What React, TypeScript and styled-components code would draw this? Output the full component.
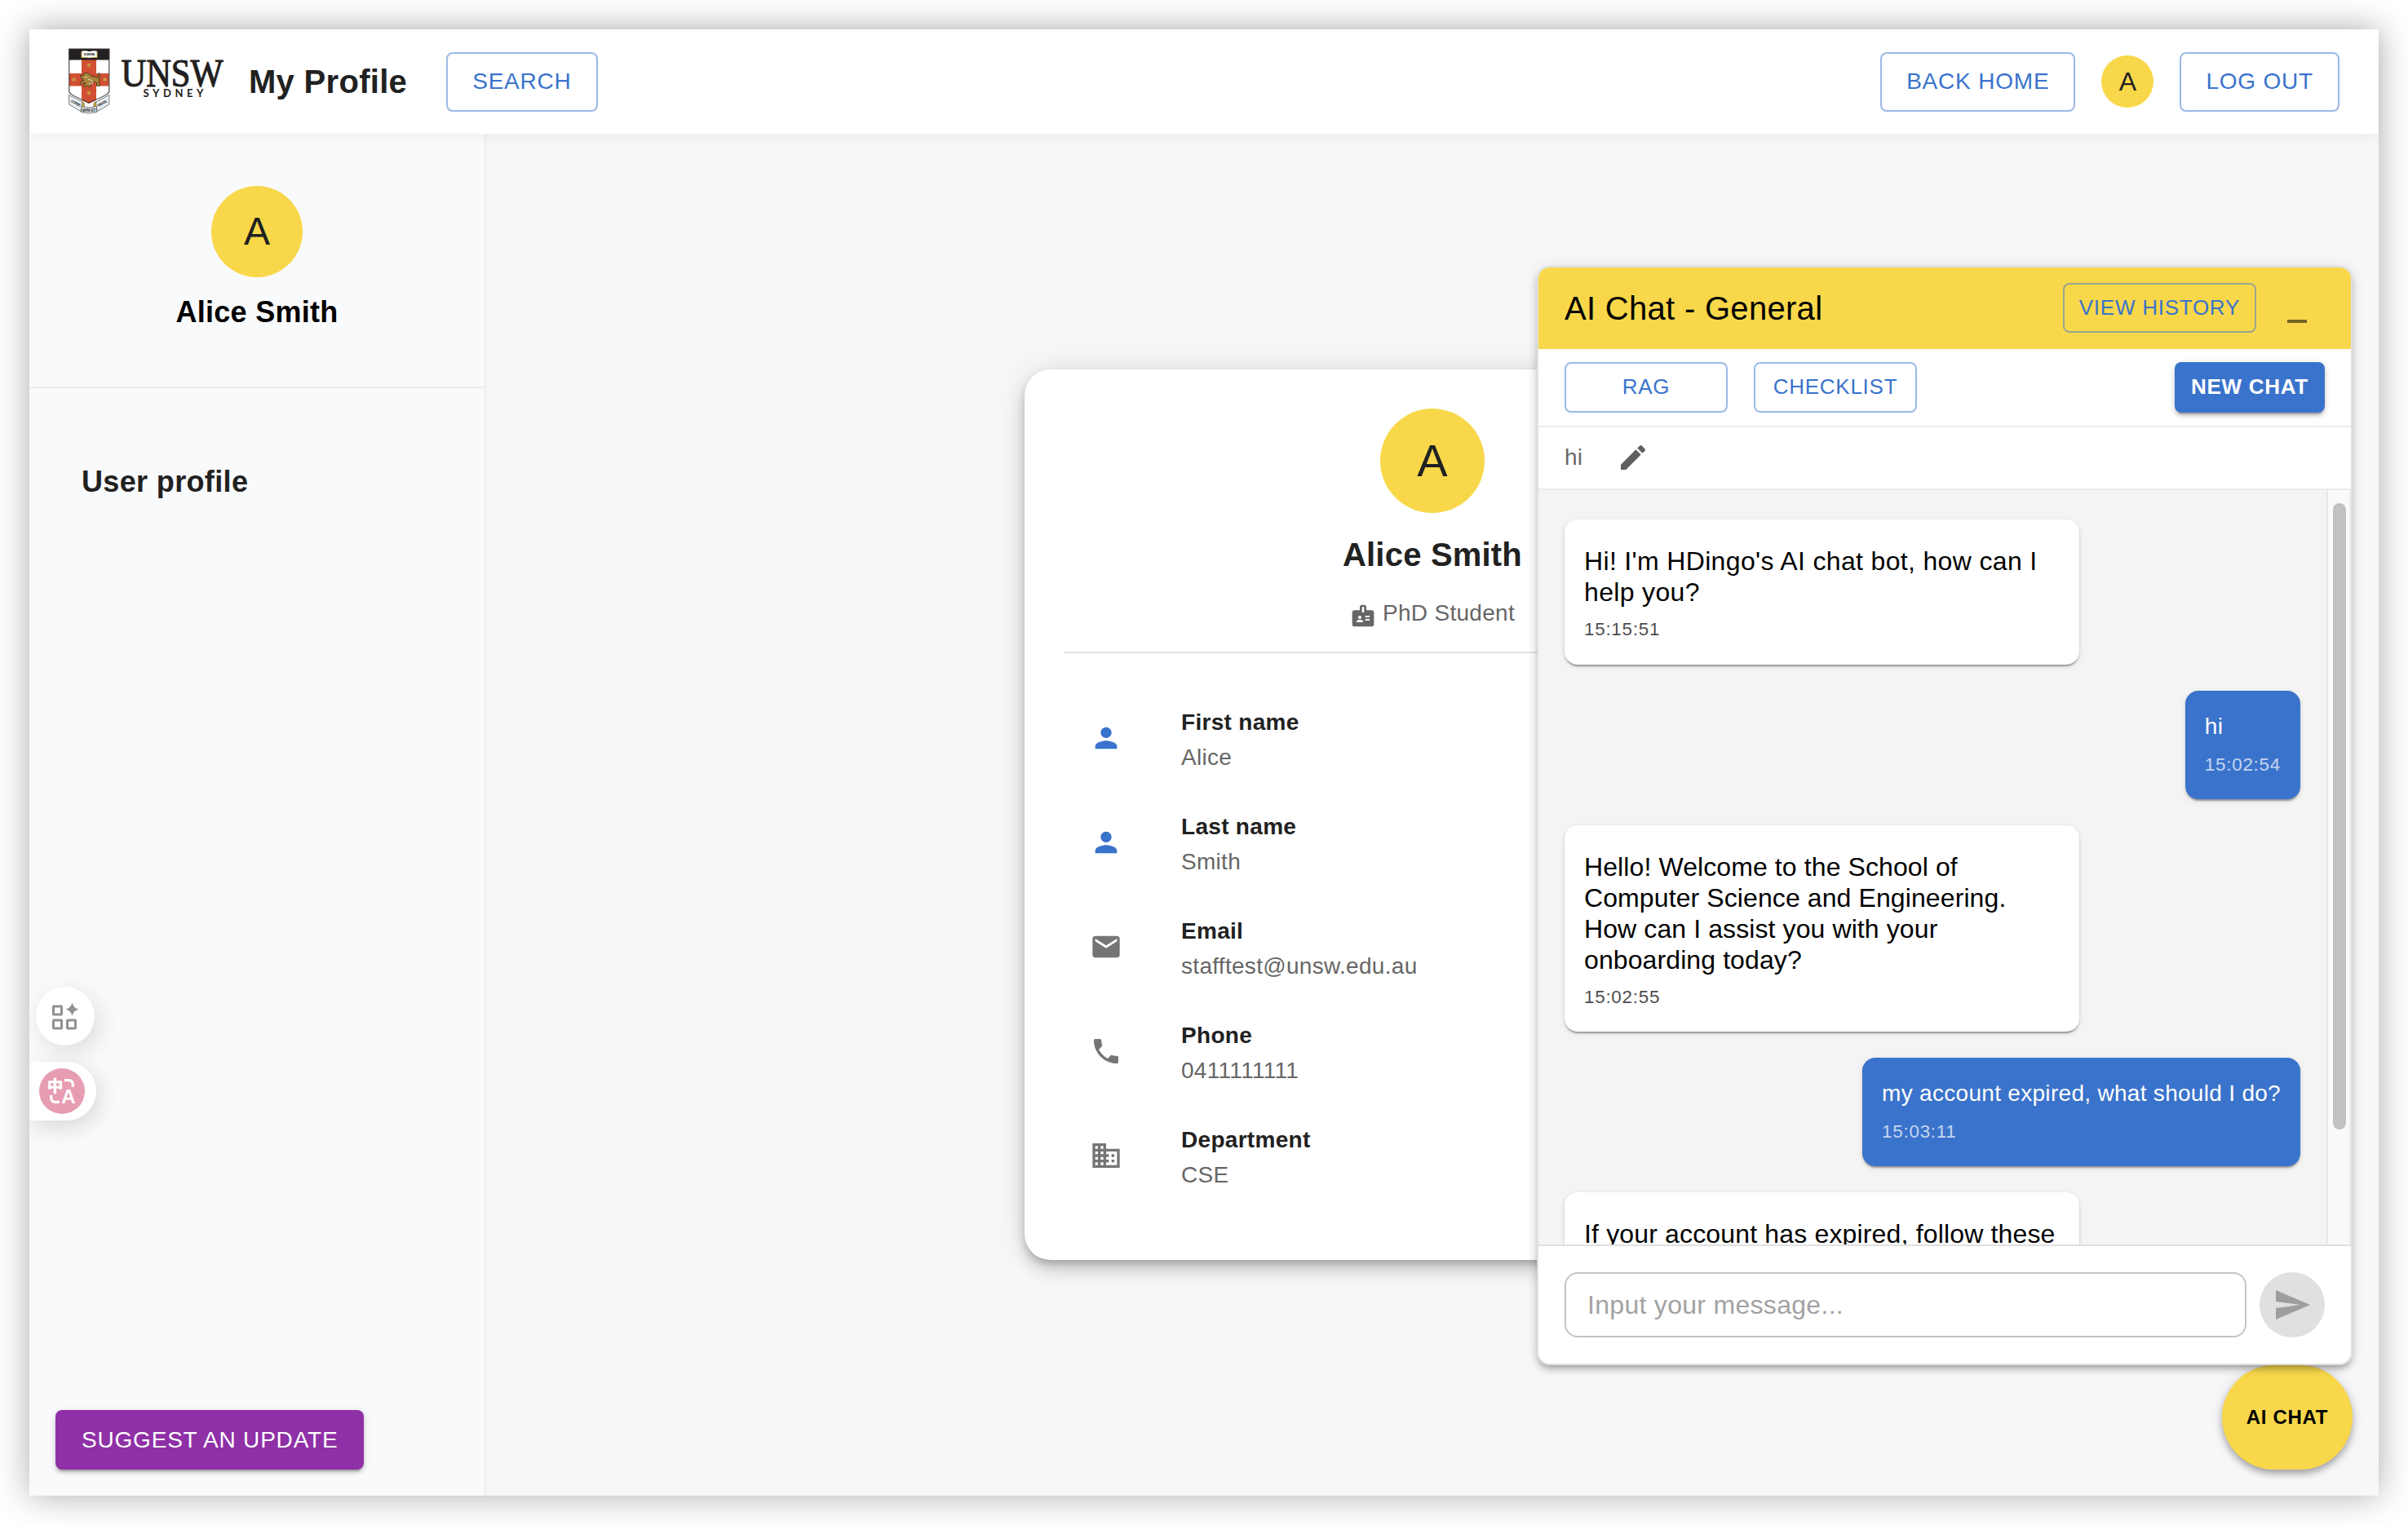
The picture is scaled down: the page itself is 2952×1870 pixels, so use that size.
import React from "react";
import styled, { createGlobalStyle } from "styled-components";

const color = {
  blue: "#3a73cb",
  blueBorder: "rgba(58, 115, 203, 0.5)",
  yellow: "#f8d84a",
  purple: "#8f30a7",
  ink: "#212121",
  muted: "#666666",
  icon: "#757575",
  line: "#e0e0e0",
};

const raised =
  "0 6px 2px -4px rgba(0,0,0,.2), 0 4px 4px 0 rgba(0,0,0,.14), 0 2px 10px 0 rgba(0,0,0,.12)";

const GlobalStyle = createGlobalStyle`
  *, *::before, *::after { box-sizing: border-box; }
  body {
    margin: 0;
    background: #fff;
    font-family: "Liberation Sans", Arial, sans-serif;
    color: ${color.ink};
  }
  button, input { font-family: inherit; margin: 0; }
  h1, h2, p { margin: 0; }
`;

const Page = styled.div`
  width: 2952px;
  height: 1870px;
  padding: 36px;
  overflow: hidden;
`;

const Window = styled.div`
  position: relative;
  display: flex;
  flex-direction: column;
  width: 2880px;
  height: 1798px;
  background: #f7f7f9;
  box-shadow: 0 0 40px rgba(0, 0, 0, 0.33);
`;

const TopBar = styled.header`
  position: relative;
  z-index: 1;
  display: flex;
  align-items: center;
  height: 128px;
  flex: none;
  padding: 0 48px;
  background: #fff;
  box-shadow: 0 4px 16px rgba(0, 0, 0, 0.05);
`;

const LogoSvg = styled.svg`
  display: block;
  width: 194px;
  height: 82px;
  margin-right: 27px;
  overflow: visible;
`;

const PageTitle = styled.h1`
  font-size: 40px;
  line-height: 64px;
  letter-spacing: 0.3px;
  margin-right: 48px;
`;

const Actions = styled.div`
  display: flex;
  align-items: center;
  gap: 32px;
  margin-left: auto;
`;

const OutlinedButton = styled.button<{ $small?: boolean; $width?: number }>`
  height: ${(p) => (p.$small ? "61.5px" : "73px")};
  width: ${(p) => (p.$width ? `${p.$width}px` : "auto")};
  padding: 0 ${(p) => (p.$small ? "18px" : "30px")};
  border: 2px solid ${color.blueBorder};
  border-radius: 8px;
  background: transparent;
  color: ${color.blue};
  font-size: ${(p) => (p.$small ? "26px" : "28px")};
  letter-spacing: 0.02857em;
  text-transform: uppercase;
  white-space: nowrap;
`;

const FilledButton = styled.button<{ $small?: boolean; $tone: string }>`
  height: ${(p) => (p.$small ? "61.5px" : "73px")};
  padding: 0 ${(p) => (p.$small ? "20px" : "32px")};
  border: 0;
  border-radius: 8px;
  background: ${(p) => p.$tone};
  color: #fff;
  font-size: ${(p) => (p.$small ? "26px" : "28px")};
  font-weight: ${(p) => (p.$small ? 700 : 400)};
  letter-spacing: 0.02857em;
  text-transform: uppercase;
  white-space: nowrap;
  box-shadow: ${raised};
`;

const Avatar = styled.div<{ $size: number; $font: number }>`
  display: flex;
  align-items: center;
  justify-content: center;
  flex: none;
  width: ${(p) => p.$size}px;
  height: ${(p) => p.$size}px;
  border-radius: 50%;
  background: ${color.yellow};
  font-size: ${(p) => p.$font}px;
  line-height: 1;
`;

const Body = styled.div`
  display: flex;
  flex: 1;
  min-height: 0;
`;

const Sidebar = styled.aside`
  display: flex;
  flex-direction: column;
  align-items: flex-start;
  width: 560px;
  flex: none;
  padding-bottom: 32px;
  background: #f9fafc;
  border-right: 2px solid #ebecee;
`;

const SidebarUser = styled.div`
  display: flex;
  flex-direction: column;
  align-items: center;
  align-self: stretch;
  gap: 16px;
  height: 312px;
  padding-top: 64px;
  border-bottom: 2px solid #ebecee;
`;

const SidebarName = styled.div`
  font-size: 36px;
  line-height: 54px;
  font-weight: 700;
  letter-spacing: 0.27px;
  color: #000;
`;

const SidebarLink = styled.div`
  margin: 88px 0 auto 64px;
  font-size: 36px;
  line-height: 54px;
  font-weight: 700;
  letter-spacing: 0.35px;
`;

const SidebarFooter = styled.div`
  padding-left: 32px;
`;

const Main = styled.main`
  display: flex;
  flex: 1;
  align-items: center;
  justify-content: center;
`;

const ProfileCard = styled.section`
  display: flex;
  flex-direction: column;
  align-items: center;
  width: 1000px;
  height: 1092px;
  padding: 48px;
  border-radius: 32px;
  background: #fff;
  box-shadow: 0 6px 10px -2px rgba(0, 0, 0, 0.2),
    0 12px 20px 0 rgba(0, 0, 0, 0.14), 0 2px 36px 0 rgba(0, 0, 0, 0.12);
`;

const ProfileName = styled.h2`
  margin-top: 19px;
  font-size: 40px;
  line-height: 64px;
  letter-spacing: 0.2px;
`;

const Role = styled.div`
  display: flex;
  gap: 8px;
  margin-top: 20px;
  height: 40px;
  font-size: 28px;
  line-height: 40px;
  letter-spacing: 0.3px;
  color: ${color.muted};

  svg {
    margin-top: 7px;
  }
`;

const Divider = styled.div`
  align-self: stretch;
  flex: none;
  height: 2px;
  margin: 27px 0 24px;
  background: ${color.line};
`;

const FieldList = styled.ul`
  align-self: stretch;
  margin: 0;
  padding: 16px 0;
  list-style: none;
`;

const Field = styled.li`
  display: flex;
  align-items: center;
  height: 128px;
  padding: 0 32px;
`;

const FieldIcon = styled.div<{ $tone: string }>`
  display: flex;
  width: 112px;
  color: ${(p) => p.$tone};
`;

const FieldText = styled.div`
  padding-top: 4px;
  font-size: 28px;
  line-height: 43px;
  letter-spacing: 0.3px;
`;

const FieldLabel = styled.div`
  font-weight: 700;
`;

const FieldValue = styled.div`
  color: ${color.muted};
`;

const IconSvg = styled.svg`
  display: block;
  flex: none;
  fill: currentColor;
`;

const ChatPanel = styled.section`
  position: absolute;
  z-index: 3;
  right: 32px;
  top: 290px;
  display: flex;
  flex-direction: column;
  width: 1000px;
  height: 1348px;
  overflow: hidden;
  border: 2px solid ${color.line};
  border-radius: 16px;
  background: #fff;
`;

const ChatShadow = styled.div`
  position: absolute;
  z-index: 2;
  right: 32px;
  top: 290px;
  width: 1000px;
  height: 1348px;
  border-radius: 16px;
  box-shadow: 0 6px 6px -4px rgba(0, 0, 0, 0.2),
    0 6px 8px 0 rgba(0, 0, 0, 0.14), 0 2px 16px 0 rgba(0, 0, 0, 0.12);
`;

const ChatHeader = styled.div`
  display: flex;
  align-items: center;
  flex: none;
  height: 100px;
  padding: 0 32px;
  background: ${color.yellow};

  & > ${OutlinedButton} {
    margin-bottom: 1px;
  }
`;

const ChatTitle = styled.h2`
  margin-right: auto;
  font-size: 40px;
  font-weight: 400;
  letter-spacing: 0.3px;
  color: #000;
`;

const MinimizeButton = styled.button`
  display: flex;
  margin-left: 16px;
  padding: 10px;
  border: 0;
  background: transparent;
  color: rgba(0, 0, 0, 0.54);
`;

const ChatToolbar = styled.div`
  display: flex;
  flex: none;
  gap: 32px;
  height: 95.5px;
  padding: 16px 32px;
  border-bottom: 2px solid #ebebeb;

  & > :last-child {
    margin-left: auto;
  }
`;

const ChatTopic = styled.div`
  display: flex;
  align-items: center;
  flex: none;
  gap: 42px;
  height: 77.5px;
  padding: 0 32px;
  border-bottom: 2px solid #ebebeb;
  font-size: 28px;
  letter-spacing: 0.3px;
  color: ${color.muted};

  svg {
    color: #606060;
  }
`;

const ChatBody = styled.div`
  display: flex;
  flex: 1;
  min-height: 0;
  background: #f4f4f4;
`;

const Messages = styled.div`
  display: flex;
  flex: 1;
  flex-direction: column;
  align-items: flex-start;
  gap: 32px;
  overflow: hidden;
  padding: 36px 32px 0;
`;

const Bubble = styled.div<{ $own?: boolean }>`
  flex: none;
  align-self: ${(p) => (p.$own ? "flex-end" : "flex-start")};
  width: ${(p) => (p.$own ? "auto" : "631px")};
  padding: ${(p) => (p.$own ? "24px" : "32px 24px 24.5px")};
  border-radius: 16px;
  background: ${(p) => (p.$own ? color.blue : "#fff")};
  color: ${(p) => (p.$own ? "#fff" : "#000")};
  box-shadow: 0 4px 2px -2px rgba(0, 0, 0, 0.2), 0 2px 2px 0 rgba(0, 0, 0, 0.14),
    0 2px 6px 0 rgba(0, 0, 0, 0.12);
`;

const BubbleText = styled.p<{ $own?: boolean; $tracking: number }>`
  font-size: ${(p) => (p.$own ? 28 : 32)}px;
  line-height: ${(p) => (p.$own ? 40 : 38)}px;
  letter-spacing: ${(p) => p.$tracking}px;
`;

const BubbleTime = styled.div`
  margin-top: 8px;
  font-size: 22.4px;
  line-height: 37px;
  letter-spacing: 0.03333em;
  opacity: 0.7;
`;

const ScrollTrack = styled.div`
  width: 30px;
  flex: none;
  padding: 16px 6px 0;
  background: #fafafa;
  border-left: 2px solid #e8e8e8;
  border-right: 2px solid #ededed;
`;

const ScrollThumb = styled.div`
  width: 16px;
  height: 768px;
  border-radius: 8px;
  background: #c1c1c1;
`;

const Composer = styled.div`
  display: flex;
  flex: none;
  gap: 16px;
  height: 146px;
  padding: 32px;
  border-top: 2px solid ${color.line};
`;

const MessageInput = styled.input`
  flex: 1;
  height: 80px;
  padding: 0 26px;
  border: 2px solid #c4c4c4;
  border-radius: 16px;
  background: #fff;
  font-size: 32px;
  letter-spacing: 0.3px;
  outline: 0;

  &::placeholder {
    color: #a2a2a2;
    opacity: 1;
  }
`;

const SendButton = styled.button`
  display: flex;
  align-items: center;
  justify-content: center;
  width: 80px;
  height: 80px;
  padding: 0;
  border: 0;
  border-radius: 50%;
  background: #e0e0e0;
  color: #9e9e9e;
`;

const ChatFab = styled.button`
  position: absolute;
  z-index: 1;
  right: 32px;
  bottom: 32px;
  width: 160px;
  height: 128px;
  padding: 0;
  border: 0;
  border-radius: 64px;
  background: ${color.yellow};
  color: #000;
  font-size: 24px;
  font-weight: 700;
  letter-spacing: 0.02857em;
  box-shadow: 0 6px 10px -2px rgba(0, 0, 0, 0.2),
    0 4px 10px 0 rgba(0, 0, 0, 0.14), 0 2px 16px 0 rgba(0, 0, 0, 0.12);
`;

const EdgeTools = styled.div`
  position: absolute;
  z-index: 2;
  left: 0;
  top: 1134px;
  display: flex;
  flex-direction: column;
  gap: 20px;
  width: 140px;
  height: 280px;
  padding-top: 40px;
  overflow: hidden;
`;

const WidgetTool = styled.div`
  display: flex;
  align-items: center;
  justify-content: center;
  width: 72px;
  height: 72px;
  flex: none;
  margin-left: 8px;
  border-radius: 50%;
  background: #fff;
  box-shadow: 6px 8px 28px rgba(0, 0, 0, 0.12);
`;

const TranslateTool = styled.div`
  display: flex;
  align-items: center;
  width: 82px;
  height: 72px;
  flex: none;
  padding-left: 12px;
  border-radius: 0 36px 36px 0;
  background: #fff;
  box-shadow: 4px 8px 28px rgba(0, 0, 0, 0.14);
`;

const paths = {
  person:
    "M12 12c2.21 0 4-1.79 4-4s-1.79-4-4-4-4 1.79-4 4 1.79 4 4 4m0 2c-2.67 0-8 1.34-8 4v2h16v-2c0-2.66-5.33-4-8-4",
  email:
    "M20 4H4c-1.1 0-1.99.9-1.99 2L2 18c0 1.1.9 2 2 2h16c1.1 0 2-.9 2-2V6c0-1.1-.9-2-2-2m0 4-8 5-8-5V6l8 5 8-5z",
  phone:
    "M6.62 10.79c1.44 2.83 3.76 5.14 6.59 6.59l2.2-2.2c.27-.27.67-.36 1.02-.24 1.12.37 2.33.57 3.57.57.55 0 1 .45 1 1V20c0 .55-.45 1-1 1-9.39 0-17-7.61-17-17 0-.55.45-1 1-1h3.5c.55 0 1 .45 1 1 0 1.25.2 2.45.57 3.57.11.35.03.74-.25 1.02z",
  business:
    "M12 7V3H2v18h20V7zM6 19H4v-2h2zm0-4H4v-2h2zm0-4H4V9h2zm0-4H4V5h2zm4 12H8v-2h2zm0-4H8v-2h2zm0-4H8V9h2zm0-4H8V5h2zm10 12h-8v-2h2v-2h-2v-2h2v-2h-2V9h8zm-2-8h-2v2h2zm0 4h-2v2h2z",
  badge:
    "M20 7h-5V4c0-1.1-.9-2-2-2h-2c-1.1 0-2 .9-2 2v3H4c-1.1 0-2 .9-2 2v11c0 1.1.9 2 2 2h16c1.1 0 2-.9 2-2V9c0-1.1-.9-2-2-2M9 12c.83 0 1.5.67 1.5 1.5S9.83 15 9 15s-1.5-.67-1.5-1.5S8.17 12 9 12m3 6H6v-.75c0-1 2-1.5 3-1.5s3 .5 3 1.5zm1-9h-2V4h2zm5 7.5h-4V15h4zm0-3h-4V12h4z",
  edit:
    "M3 17.25V21h3.75L17.81 9.94l-3.75-3.75zM20.71 7.04c.39-.39.39-1.02 0-1.41l-2.34-2.34a.996.996 0 0 0-1.41 0l-1.83 1.83 3.75 3.75z",
  send: "M2.01 21 23 12 2.01 3 2 10l15 2-15 2z",
  minimize: "M6 19h12v2H6z",
};

function Icon({ name, size }: { name: keyof typeof paths; size: number }) {
  return (
    <IconSvg width={size} height={size} viewBox="0 0 24 24" aria-hidden>
      <path d={paths[name]} />
    </IconSvg>
  );
}

function Logo() {
  return (
    <LogoSvg viewBox="0 0 194 82" role="img" aria-label="UNSW Sydney">
      {/* shield */}
      <path d="M.8 1h49v52c0 3-6 6-25 14C6.500 59 .8 56 .8 53Z" fill="#fff" />
      <path d="M16 14h18v50l-9 4-9-4Z" fill="#d14f33" />
      <path d="M1 31h48.600v15.500H1Z" fill="#d14f33" />
      <path d="M.3 1h49.900v13.500H.3Z" fill="#231f20" />
      <path
        d="M.8 1h49v52c0 3-6 6-25 14C6.500 59 .8 56 .8 53Z"
        fill="none"
        stroke="#3a3536"
        strokeWidth="1.100"
      />
      {/* open book */}
      <path d="M15.500 4h20v8h-20Z" fill="#c2a649" />
      <path d="M16.500 3.500q4.500-1 9 .8 4.500-1.800 9-.8v7.500q-4.500-.6-9 .8-4.500-1.400-9-.8Z" fill="#fff" />
      <text x="25.500" y="8.600" fontSize="4" fontWeight="700" fill="#333" textAnchor="middle" textLength="14">
        SCIENTIA
      </text>
      {/* stars */}
      {[
        [25, 21],
        [6.5, 38.5],
        [44.5, 38.5],
        [25, 55],
      ].map(([x, y]) => (
        <path
          key={`${x}-${y}`}
          transform={`translate(${x} ${y})`}
          d="M0-3 .9-1.500 2.700-1.500 1.700 0 2.700 1.500.9 1.500 0 3-.9 1.500-2.700 1.500-1.700 0-2.700-1.500-.9-1.500Z"
          fill="#c39a3c"
        />
      ))}
      {/* lion */}
      <path
        d="M15 33l3 1 1-3 4-.6 3 1.600 2 2.500 4 .4 3 1.600 2-3-1.500-2 2-1 1.200 3-1.500 4 .8 3-1 2.500 2 2-1 1.600-4-.6 1-3-3-1.400-4 .4-1 3 1 1.500-3 1-2-1.600-3 1.600-2-1 2-2 .6-2-3 .4-2 2-1.600-1.200 1.600-3 3-.8-1-2-3-1.400Z"
        fill="#a8853b"
        stroke="#3b2c18"
        strokeWidth=".8"
      />
      <path d="M24 38l4 1.500 2 3-3 1.500-2-1M20 35l3 1" fill="none" stroke="#f3dfc0" strokeWidth="1" />
      {/* motto ribbon */}
      <path d="M.5 57.500 18 66.500l-3 11L.8 69Z" fill="#eaf1f6" stroke="#555" strokeWidth=".8" />
      <path d="M50 57.500 32.500 66.500l3 11L49.700 69Z" fill="#eaf1f6" stroke="#555" strokeWidth=".8" />
      <path d="M16.500 66l3 1.500v5l-3.500 1.500ZM33.800 66l-3 1.500v5l3.500 1.500Z" fill="#c9a93c" stroke="#555" strokeWidth=".5" />
      <path d="M15.500 71.500q9.500 3 19 0v7q-9.500 2.500-19 0Z" fill="#eaf1f6" stroke="#555" strokeWidth=".8" />
      <text x="2.500" y="66" fontSize="4.600" fontWeight="700" fill="#333" textLength="13" transform="rotate(27 2.500 66)">
        CORDE
      </text>
      <text x="36.500" y="72" fontSize="4.600" fontWeight="700" fill="#333" textLength="13" transform="rotate(-27 36.500 72)">
        MENTE
      </text>
      <text x="25" y="77.600" fontSize="4.600" fontWeight="700" fill="#333" textAnchor="middle" textLength="17">
        MANU ET
      </text>
      {/* wordmark */}
      <text
        x="64.500"
        y="46.500"
        fontFamily="Liberation Serif, serif"
        fontSize="48"
        fill="#231f20"
        stroke="#231f20"
        strokeWidth="1.100"
        textLength="125"
        lengthAdjust="spacingAndGlyphs"
      >
        UNSW
      </text>
      <text
        x="91.500"
        y="60.300"
        fontFamily="Lato, sans-serif"
        fontSize="13"
        fontWeight="700"
        fill="#231f20"
        textLength="74"
      >
        SYDNEY
      </text>
    </LogoSvg>
  );
}

function WidgetIcon() {
  return (
    <svg width="36" height="36" viewBox="0 0 36 36" aria-hidden>
      <g fill="none" stroke="#919191" strokeWidth="3">
        <rect x="3.500" y="6" width="10" height="10" rx=".6" />
        <rect x="3.500" y="23" width="10" height="10" rx=".6" />
        <rect x="20.500" y="23" width="10" height="10" rx=".6" />
      </g>
      <path d="M26.500 1.500q1.400 6.600 8 8.200-6.600 1.600-8 8.200-1.400-6.600-8-8.200 6.600-1.600 8-8.200Z" fill="#919191" />
    </svg>
  );
}

function TranslateIcon() {
  return (
    <svg width="56" height="56" viewBox="0 0 56 56" aria-hidden>
      <circle cx="28" cy="28" r="28" fill="#e79db1" />
      <g fill="none" stroke="#fff" strokeWidth="3.200">
        <path d="M31 14.700h5q5.300 0 5.300 5.300v3" />
        <path d="M14.700 33v3q0 5.300 5.300 5.300h5" />
      </g>
      <text
        x="19.500"
        y="28.800"
        fontFamily="Noto Sans CJK SC, sans-serif"
        fontSize="19.500"
        fontWeight="700"
        fill="#fff"
        stroke="#fff"
        strokeWidth=".6"
        textAnchor="middle"
      >
        中
      </text>
      <text x="36" y="43" fontSize="24" fontWeight="700" fill="#fff" textAnchor="middle">
        A
      </text>
    </svg>
  );
}

const fields: { icon: keyof typeof paths; label: string; value: string; tone: string }[] = [
  { icon: "person", label: "First name", value: "Alice", tone: color.blue },
  { icon: "person", label: "Last name", value: "Smith", tone: color.blue },
  { icon: "email", label: "Email", value: "stafftest@unsw.edu.au", tone: color.icon },
  { icon: "phone", label: "Phone", value: "0411111111", tone: color.icon },
  { icon: "business", label: "Department", value: "CSE", tone: color.icon },
];

const messages: { text: string; time: string; tracking: number; own?: boolean }[] = [
  { text: "Hi! I'm HDingo's AI chat bot, how can I help you?", time: "15:15:51", tracking: 0.34 },
  { text: "hi", time: "15:02:54", tracking: 0.3, own: true },
  {
    text: "Hello! Welcome to the School of Computer Science and Engineering. How can I assist you with your onboarding today?",
    time: "15:02:55",
    tracking: 0.1,
  },
  { text: "my account expired, what should I do?", time: "15:03:11", tracking: 0.3, own: true },
  { text: "If your account has expired, follow these", time: "", tracking: 0.16 },
];

export default function App() {
  return (
    <>
      <GlobalStyle />
      <Page>
        <Window>
          <TopBar>
            <Logo />
            <PageTitle>My Profile</PageTitle>
            <OutlinedButton>Search</OutlinedButton>
            <Actions>
              <OutlinedButton>Back Home</OutlinedButton>
              <Avatar $size={64} $font={32}>A</Avatar>
              <OutlinedButton>Log out</OutlinedButton>
            </Actions>
          </TopBar>

          <Body>
            <Sidebar>
              <SidebarUser>
                <Avatar $size={112} $font={48}>A</Avatar>
                <SidebarName>Alice Smith</SidebarName>
              </SidebarUser>
              <SidebarLink>User profile</SidebarLink>
              <SidebarFooter>
                <FilledButton $tone={color.purple}>Suggest an update</FilledButton>
              </SidebarFooter>
            </Sidebar>

            <Main>
              <ProfileCard>
                <Avatar $size={128} $font={56}>A</Avatar>
                <ProfileName>Alice Smith</ProfileName>
                <Role>
                  <Icon name="badge" size={32} />
                  PhD Student
                </Role>
                <Divider />
                <FieldList>
                  {fields.map((f) => (
                    <Field key={f.label}>
                      <FieldIcon $tone={f.tone}>
                        <Icon name={f.icon} size={40} />
                      </FieldIcon>
                      <FieldText>
                        <FieldLabel>{f.label}</FieldLabel>
                        <FieldValue>{f.value}</FieldValue>
                      </FieldText>
                    </Field>
                  ))}
                </FieldList>
              </ProfileCard>
            </Main>
          </Body>

          <EdgeTools>
            <WidgetTool>
              <WidgetIcon />
            </WidgetTool>
            <TranslateTool>
              <TranslateIcon />
            </TranslateTool>
          </EdgeTools>

          <ChatFab>AI CHAT</ChatFab>
          <ChatShadow />
          <ChatPanel>
            <ChatHeader>
              <ChatTitle>AI Chat - General</ChatTitle>
              <OutlinedButton $small>View history</OutlinedButton>
              <MinimizeButton aria-label="Minimize">
                <Icon name="minimize" size={48} />
              </MinimizeButton>
            </ChatHeader>
            <ChatToolbar>
              <OutlinedButton $small $width={200}>RAG</OutlinedButton>
              <OutlinedButton $small $width={200}>Checklist</OutlinedButton>
              <FilledButton $small $tone={color.blue}>New chat</FilledButton>
            </ChatToolbar>
            <ChatTopic>
              hi
              <Icon name="edit" size={40} />
            </ChatTopic>
            <ChatBody>
              <Messages>
                {messages.map((m) => (
                  <Bubble key={m.text} $own={m.own}>
                    <BubbleText $own={m.own} $tracking={m.tracking}>{m.text}</BubbleText>
                    <BubbleTime>{m.time}</BubbleTime>
                  </Bubble>
                ))}
              </Messages>
              <ScrollTrack>
                <ScrollThumb />
              </ScrollTrack>
            </ChatBody>
            <Composer>
              <MessageInput placeholder="Input your message..." />
              <SendButton aria-label="Send">
                <Icon name="send" size={48} />
              </SendButton>
            </Composer>
          </ChatPanel>
        </Window>
      </Page>
    </>
  );
}
